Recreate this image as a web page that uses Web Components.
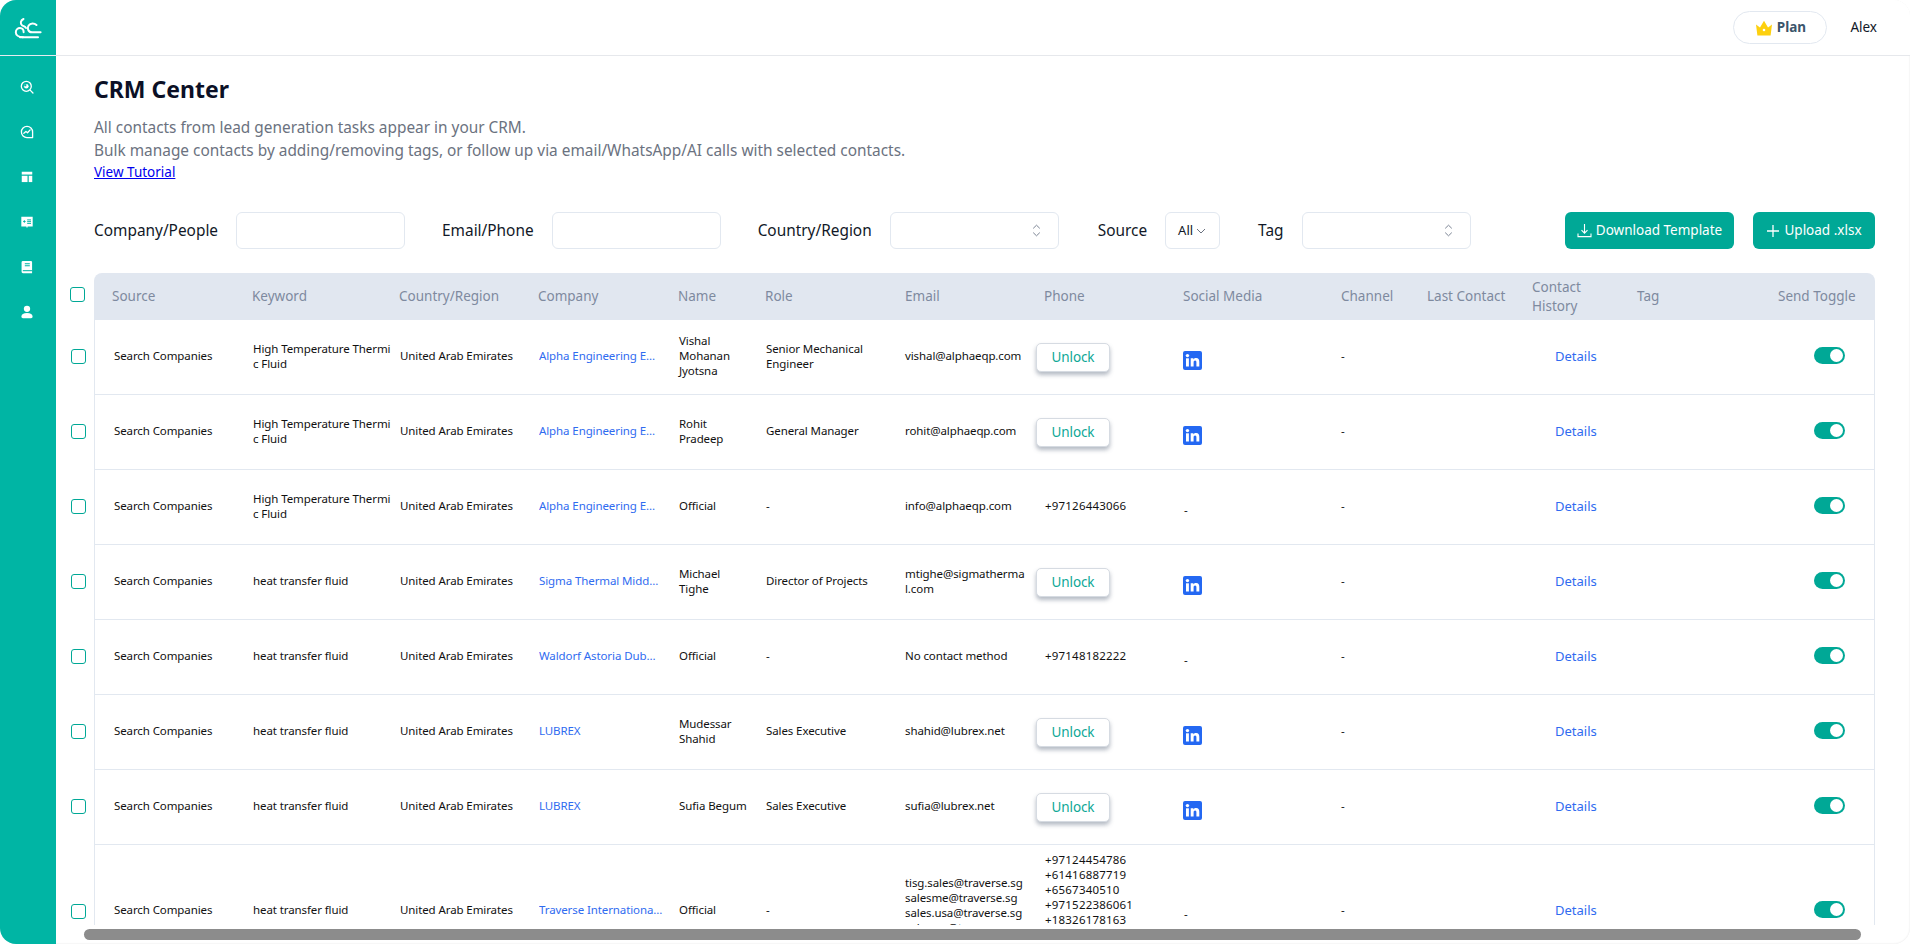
<!DOCTYPE html>
<html lang="en">
<head>
<meta charset="utf-8">
<title>CRM Center</title>
<style>
html,body{margin:0;height:100%;background:#fff;overflow:hidden}
body{font-family:"Noto Sans","Open Sans",sans-serif}
</style>
</head>
<body>
<crm-app></crm-app>
<script>
function shadow(el, html){ const r = el.attachShadow({mode:'open'}); r.innerHTML = html; return r; }

class CrmSidebar extends HTMLElement{
  connectedCallback(){ if(this.shadowRoot) return;
    shadow(this,`<style>
    :host{display:flex;flex-direction:column;align-items:center;width:56px;flex:none;background:#00b5a4;color:#fff}
    .logo{height:55px;width:100%;display:flex;align-items:center;justify-content:center;border-bottom:1px solid #e6ebf1;flex:none}
    .nav{display:flex;flex-direction:column;align-items:center;padding:24px 3px 0 0;gap:31px}
    svg{display:block}
    .nav svg{width:14px;height:14px}
    </style>
    <div class="logo"><svg width="56" height="55" viewBox="0 0 56 55" fill="none" stroke="#fff" stroke-width="2" stroke-linecap="round">
      <path d="M23.5 19C20.5 20.5 20 23.5 22 25.2C23.5 26.3 25.2 26.8 26 28"/>
      <path d="M23 37.3C18.5 37.3 15.8 35 15.8 32.2C15.8 29.6 17.8 28 20 28C22.3 28 23.8 29.8 23.6 32.2"/>
      <path d="M36.5 25C34.5 23 30.5 22.6 28.6 25.5C26.7 28.5 28.4 32.3 32 32.3H40.6"/>
      <path d="M20 37.3H38"/>
    </svg></div>
    <div class="nav">
      <svg viewBox="0 0 16 16" fill="none" stroke="#fff" stroke-width="1.5" stroke-linecap="round"><circle cx="7.2" cy="7.2" r="5.7"/><circle cx="7.2" cy="7.2" r="2.6" fill="#fff" stroke="none"/><path d="M7.2 7.2V4.6A2.6 2.6 0 0 0 4.6 7.2Z" fill="#00b5a4" stroke="none"/><path d="M11.6 11.6L14.8 14.8"/></svg>
      <svg viewBox="0 0 16 16" fill="none" stroke="#fff" stroke-width="1.5" stroke-linecap="round" stroke-linejoin="round"><path d="M8 1.6A6.4 6.4 0 1 0 8 14.4H14.4V8A6.4 6.4 0 0 0 8 1.6Z"/><path d="M4.4 9.4L6.8 7.4L8.6 8.8L11.6 5.6"/></svg>
      <svg viewBox="0 0 16 16" fill="#fff"><rect x="2" y="2" width="12" height="3.2"/><rect x="2" y="6.6" width="6.6" height="7.2"/><rect x="10" y="6.6" width="4" height="7.2"/></svg>
      <svg viewBox="0 0 16 16"><path d="M1.5 2H14.5V13H8.8L8 15L7.2 13H1.5Z" fill="#fff"/><path d="M3.6 7.4H6.4M5 6V8.8" stroke="#00b5a4" stroke-width="1.1"/><path d="M8.2 5.6H12.6M8.2 7.6H12.6M8.2 9.6H12.6" stroke="#00b5a4" stroke-width="1.1"/></svg>
      <svg viewBox="0 0 16 16"><path d="M3.4 1H12.4A1.4 1.4 0 0 1 13.8 2.4V15H3.4A1.6 1.6 0 0 1 1.8 13.4V2.6A1.6 1.6 0 0 1 3.4 1Z" fill="#fff"/><path d="M5.5 4.2H11.2M5.5 6.6H11.2" stroke="#00b5a4" stroke-width="1.2"/><path d="M3.2 12.2H13.8" stroke="#00b5a4" stroke-width="1.2"/></svg>
      <svg viewBox="0 0 16 16" fill="#fff"><circle cx="8" cy="4.4" r="3.6"/><path d="M1.6 13.2C1.6 10.6 4 9.2 8 9.2S14.4 10.6 14.4 13.2C14.4 14.4 13.6 15 12.6 15H3.4C2.4 15 1.6 14.4 1.6 13.2Z"/></svg>
    </div>`);
  }
}

class CrmTopbar extends HTMLElement{
  connectedCallback(){ if(this.shadowRoot) return;
    shadow(this,`<style>
    :host{display:flex;align-items:center;justify-content:flex-end;height:55px;flex:none;border-bottom:1px solid #e6e8ec;background:#fff}
    .plan{box-sizing:border-box;width:94px;height:33px;margin-right:23px;border:1px solid #e2e8f0;border-radius:17px;display:flex;align-items:center;justify-content:center;gap:4px;font:700 13.5px/1 "Noto Sans",sans-serif;color:#3b556b}
    .user{font:13.5px/1 "Noto Sans",sans-serif;color:#111827;margin-right:33px}
    </style>
    <div class="plan"><svg width="18" height="16" viewBox="0 0 18 16"><path d="M1 4.5L5 7.5L9 .8L13 7.5L17 4.5L15.6 15.4H2.4Z" fill="#fdd00f"/><circle cx="9" cy="10" r="1.3" fill="#fff"/></svg><span>Plan</span></div>
    <div class="user"><slot></slot></div>`);
  }
}

class CrmLabel extends HTMLElement{
  connectedCallback(){ if(this.shadowRoot) return;
    shadow(this,`<style>:host{display:block;flex:none;font:15.4px/1 "Noto Sans",sans-serif;color:#111827}</style><slot></slot>`);
  }
}

class CrmField extends HTMLElement{
  connectedCallback(){ if(this.shadowRoot) return;
    const type=this.getAttribute('type')||'input';
    const arrow = type==='select' ? `<svg width="9" height="13" viewBox="0 0 9 13" fill="none" stroke="#7b8494" stroke-width="1"><path d="M1.2 4.4L4.5 1.2L7.8 4.4M1.2 8.6L4.5 11.8L7.8 8.6"/></svg>` : '';
    shadow(this,`<style>
    :host{display:flex;align-items:center;flex:none;gap:18px}
    .box{box-sizing:border-box;width:169px;height:37px;border:1px solid #e2e8f0;border-radius:6px;background:#fff;display:flex;align-items:center;justify-content:flex-end;padding-right:17px}
    </style><crm-label><slot></slot></crm-label><div class="box">${arrow}</div>`);
  }
}

class CrmAllSelect extends HTMLElement{
  connectedCallback(){ if(this.shadowRoot) return;
    shadow(this,`<style>
    :host{box-sizing:border-box;display:flex;align-items:center;gap:3px;width:55px;height:37px;padding-left:12px;border:1px solid #e2e8f0;border-radius:6px;font:13px/1 "Noto Sans",sans-serif;color:#111827;flex:none}
    </style><span><slot></slot></span><svg width="10" height="6" viewBox="0 0 10 6" fill="none" stroke="#6b7280"><path d="M1 1L5 5L9 1"/></svg>`);
  }
}

class CrmButton extends HTMLElement{
  connectedCallback(){ if(this.shadowRoot) return;
    shadow(this,`<style>
    :host{box-sizing:border-box;display:flex;align-items:center;justify-content:center;height:37px;gap:4px;border-radius:6px;background:#00a896;color:#fff;font:13.5px/1 "Noto Sans",sans-serif;flex:none}
    ::slotted(svg){display:block}
    </style><slot></slot>`);
  }
}

class CrmCheckbox extends HTMLElement{
  connectedCallback(){ if(this.shadowRoot) return;
    shadow(this,`<style>:host{box-sizing:border-box;display:block;width:15px;height:15px;border:1px solid #00a896;border-radius:3px;background:#fff;flex:none}</style>`);
  }
}

class CrmUnlock extends HTMLElement{
  connectedCallback(){ if(this.shadowRoot) return;
    shadow(this,`<style>
    :host{box-sizing:border-box;display:flex;align-items:center;justify-content:center;width:74px;height:29px;margin:3px 0 0 10px;padding-top:1px;border:1px solid #d6dbe2;border-radius:5px;background:#fff;box-shadow:0 3px 4px rgba(90,105,125,.45);color:#0ea896;font:13.5px/1 "Noto Sans",sans-serif}
    </style><slot></slot>`);
  }
}

class CrmToggle extends HTMLElement{
  connectedCallback(){ if(this.shadowRoot) return;
    shadow(this,`<style>
    :host{box-sizing:border-box;display:flex;align-items:center;justify-content:flex-end;width:31px;height:17px;margin:0 0 0 54px;padding-right:2px;border-radius:9px;background:#00a896}
    i{display:block;width:13px;height:13px;border-radius:50%;background:#fff}
    </style><i></i>`);
  }
}

class CrmLinkedin extends HTMLElement{
  connectedCallback(){ if(this.shadowRoot) return;
    shadow(this,`<style>:host{display:block;margin:9px 0 0 18px;width:19px;height:19px}svg{display:block}</style>
    <svg width="19" height="19" viewBox="0 0 19 19"><rect width="19" height="19" rx="2" fill="#2468f2"/><rect x="3" y="7.3" width="2.9" height="8.2" fill="#fff"/><circle cx="4.45" cy="4.6" r="1.7" fill="#fff"/><path d="M7.7 7.3H10.4V8.5C11 7.6 12 7.1 13.2 7.1C15.4 7.1 16.3 8.5 16.3 10.8V15.5H13.4V11.4C13.4 10.3 13 9.6 12.1 9.6C11.1 9.6 10.6 10.3 10.6 11.4V15.5H7.7Z" fill="#fff"/></svg>`);
  }
}

class CrmCell extends HTMLElement{
  connectedCallback(){ if(this.shadowRoot) return;
    shadow(this,`<style>
    :host{display:flex;align-items:center;min-width:0;padding-left:var(--pad,19px);box-sizing:border-box;font:11.5px/15px "Noto Sans",sans-serif;letter-spacing:-.1px;color:#111;padding-bottom:3px}
    :host([flush]){padding-left:0}
    :host([top]){align-items:flex-start;padding-bottom:0}
    </style><div part="in"><slot></slot></div>`);
  }
}

class CrmRow extends HTMLElement{
  connectedCallback(){ if(this.shadowRoot) return;
    const h=this.getAttribute('height')||'75';
    const up=this.hasAttribute('height')?0:-3;
    shadow(this,`<style>
    :host{display:flex;align-items:center;flex:none}
    .c{width:24px;flex:none;box-sizing:border-box;padding-left:1px;margin-top:${up}px}
    .g{box-sizing:border-box;height:${h}px;flex:1;display:grid;grid-template-columns:139px 147px 139px 140px 87px 140px 139px 139px 158px 86px 105px 105px 141px 114px;border:solid #e2e8f0;border-width:0 1px 1px 1px}
    </style><div class="c"><crm-checkbox></crm-checkbox></div><div class="g"><slot></slot></div>`);
  }
}

class CrmTableHead extends HTMLElement{
  connectedCallback(){ if(this.shadowRoot) return;
    const cols=['Source','Keyword','Country/Region','Company','Name','Role','Email','Phone','Social Media','Channel','Last Contact','Contact<br>History','Tag','Send Toggle'];
    shadow(this,`<style>
    :host{display:flex;align-items:center;flex:none}
    .c{width:24px;flex:none;margin-top:-4px}
    .g{box-sizing:border-box;height:47px;flex:1;display:grid;grid-template-columns:140px 147px 139px 140px 87px 140px 139px 139px 158px 86px 105px 105px 141px 115px;background:#e1e7f0;border-radius:8px 8px 0 0;font:13.5px/18.5px "Noto Sans",sans-serif;color:#7e8a9f;align-items:center}
    .g div{padding-left:18px;white-space:nowrap}
    </style><div class="c"><crm-checkbox></crm-checkbox></div><div class="g">${cols.map(c=>`<div>${c}</div>`).join('')}</div>`);
  }
}

class CrmTable extends HTMLElement{
  connectedCallback(){ if(this.shadowRoot) return;
    const A='Alpha Engineering Equipment',S='Search Companies',HT='High Temperature Thermic Fluid',H='heat transfer fluid',U='United Arab Emirates';
    const rows=[
      [HT,A,'Vishal Mohanan Jyotsna','Senior Mechanical Engineer','vishal@alphaeqp.com',null,1],
      [HT,A,'Rohit Pradeep','General Manager','rohit@alphaeqp.com',null,1],
      [HT,A,'Official','-','info@alphaeqp.com','+97126443066',0],
      [H,'Sigma Thermal Middle East','Michael Tighe','Director of Projects','mtighe@sigmathermal.com',null,1],
      [H,'Waldorf Astoria Dubai Palm','Official','-','No contact method','+97148182222',0],
      [H,'LUBREX','Mudessar Shahid','Sales Executive','shahid@lubrex.net',null,1],
      [H,'LUBREX','Sufia Begum','Sales Executive','sufia@lubrex.net',null,1],
    ];
    const rowHtml=(r,big)=>`<crm-row ${big?'height="133"':''}>
      <crm-cell>${S}</crm-cell>
      <crm-cell><div class="kw">${r[0]}</div></crm-cell>
      <crm-cell><div class="nw">${U}</div></crm-cell>
      <crm-cell><div class="co" ${big?'style="width:124px"':''}>${r[1]}</div></crm-cell>
      <crm-cell>${r[2]}</crm-cell>
      <crm-cell>${r[3]}</crm-cell>
      ${big?`<crm-cell top style="--pad:18px"><div class="lines" style="padding-top:30px">${r[4]}</div></crm-cell>`:`<crm-cell style="--pad:18px"><div class="em">${r[4]}</div></crm-cell>`}
      ${big?`<crm-cell top><div class="lines ph" style="padding-top:7px">${r[5]}</div></crm-cell>`:(r[5]?`<crm-cell><span class="ph">${r[5]}</span></crm-cell>`:`<crm-cell flush><crm-unlock>Unlock</crm-unlock></crm-cell>`)}
      ${r[6]?`<crm-cell flush><crm-linkedin></crm-linkedin></crm-cell>`:`<crm-cell><span class="dash">-</span></crm-cell>`}
      <crm-cell style="--pad:18px">-</crm-cell>
      <crm-cell></crm-cell>
      <crm-cell><a class="d">Details</a></crm-cell>
      <crm-cell></crm-cell>
      <crm-cell flush><crm-toggle></crm-toggle></crm-cell>
    </crm-row>`;
    const big=[H,'Traverse International Pte Ltd','Official','-','tisg.sales@traverse.sg<br>salesme@traverse.sg<br>sales.usa@traverse.sg<br>sales.eu@traverse.sg','+97124454786<br>+61416887719<br>+6567340510<br>+971522386061<br>+18326178163',0];
    shadow(this,`<style>
    :host{display:flex;flex-direction:column;flex:1;min-height:0;overflow:hidden;padding:0 35px 0 14px}
    .kw{width:140px;word-break:break-all}
    .nw{white-space:nowrap}
    .co{width:122px;white-space:nowrap;overflow:hidden;text-overflow:ellipsis;color:#2f6bf0}
    .em{width:121px;word-break:break-all}
    .lines{white-space:nowrap}
    .ph{letter-spacing:.2px}
    .dash{display:inline-block;margin-top:8px}
    .d{display:inline-block;margin:2px 0 0 22px;font-size:13px;letter-spacing:0;color:#2f6bf0}
    </style><crm-table-head></crm-table-head>${rows.map(r=>rowHtml(r)).join('')}${rowHtml(big,true)}`);
  }
}

class CrmScrollbar extends HTMLElement{
  connectedCallback(){ if(this.shadowRoot) return;
    shadow(this,`<style>
    :host{display:block;height:19px;flex:none;padding:4px 0 0 28px;box-sizing:border-box}
    i{display:block;width:1777px;height:11px;border-radius:6px;background:#8c8c8c}
    </style><i></i>`);
  }
}

class CrmApp extends HTMLElement{
  connectedCallback(){ if(this.shadowRoot) return;
    shadow(this,`<style>
    :host{display:flex;box-sizing:border-box;width:1910px;height:944px;border-radius:16px;overflow:hidden;background:#fff;box-shadow:inset 0 0 2px rgba(0,0,0,.12)}
    main{flex:1;min-width:0;display:flex;flex-direction:column}
    .intro{flex:none;padding:17px 35px 0 38px}
    h1{margin:0;font:700 23px/32px "Noto Sans",sans-serif;color:#0b1026}
    p{margin:11px 0 0;font:15.4px/23px "Noto Sans",sans-serif;color:#6b7280}
    a{display:block;width:max-content;font:13.5px/21px "Noto Sans",sans-serif;color:#0000ee;text-decoration:underline}
    .filters{flex:none;display:flex;align-items:center;margin:29px 35px 24px 38px}
    .filters crm-field{margin-right:37px}
    .filters crm-field.wide{margin-right:39px}
    .filters crm-allselect{margin:0 38px 0 18px}
    .dl{width:169px;margin-left:auto;margin-right:19px}
    .up{width:122px}
    </style>
    <crm-sidebar></crm-sidebar>
    <main>
      <crm-topbar>Alex</crm-topbar>
      <div class="intro">
        <h1>CRM Center</h1>
        <p>All contacts from lead generation tasks appear in your CRM.<br>Bulk manage contacts by adding/removing tags, or follow up via email/WhatsApp/AI calls with selected contacts.</p>
        <a>View Tutorial</a>
      </div>
      <div class="filters">
        <crm-field>Company/People</crm-field>
        <crm-field>Email/Phone</crm-field>
        <crm-field class="wide" type="select">Country/Region</crm-field>
        <crm-label>Source</crm-label>
        <crm-allselect>All</crm-allselect>
        <crm-field type="select">Tag</crm-field>
        <crm-button class="dl"><svg width="15" height="15" viewBox="0 0 15 15" fill="none" stroke="#fff" stroke-width="1.1"><path d="M7.5 1V10M4.5 7.2L7.5 10.2L10.5 7.2M1 10.5V13.6H14V10.5"/></svg>Download Template</crm-button>
        <crm-button class="up"><svg width="14" height="14" viewBox="0 0 14 14" stroke="#fff" stroke-width="1.3"><path d="M7 1V13M1 7H13"/></svg>Upload .xlsx</crm-button>
      </div>
      <crm-table></crm-table>
      <crm-scrollbar></crm-scrollbar>
    </main>`);
  }
}

customElements.define('crm-sidebar',CrmSidebar);
customElements.define('crm-topbar',CrmTopbar);
customElements.define('crm-label',CrmLabel);
customElements.define('crm-field',CrmField);
customElements.define('crm-allselect',CrmAllSelect);
customElements.define('crm-button',CrmButton);
customElements.define('crm-checkbox',CrmCheckbox);
customElements.define('crm-unlock',CrmUnlock);
customElements.define('crm-toggle',CrmToggle);
customElements.define('crm-linkedin',CrmLinkedin);
customElements.define('crm-cell',CrmCell);
customElements.define('crm-row',CrmRow);
customElements.define('crm-table-head',CrmTableHead);
customElements.define('crm-table',CrmTable);
customElements.define('crm-scrollbar',CrmScrollbar);
customElements.define('crm-app',CrmApp);
</script>
</body>
</html>
